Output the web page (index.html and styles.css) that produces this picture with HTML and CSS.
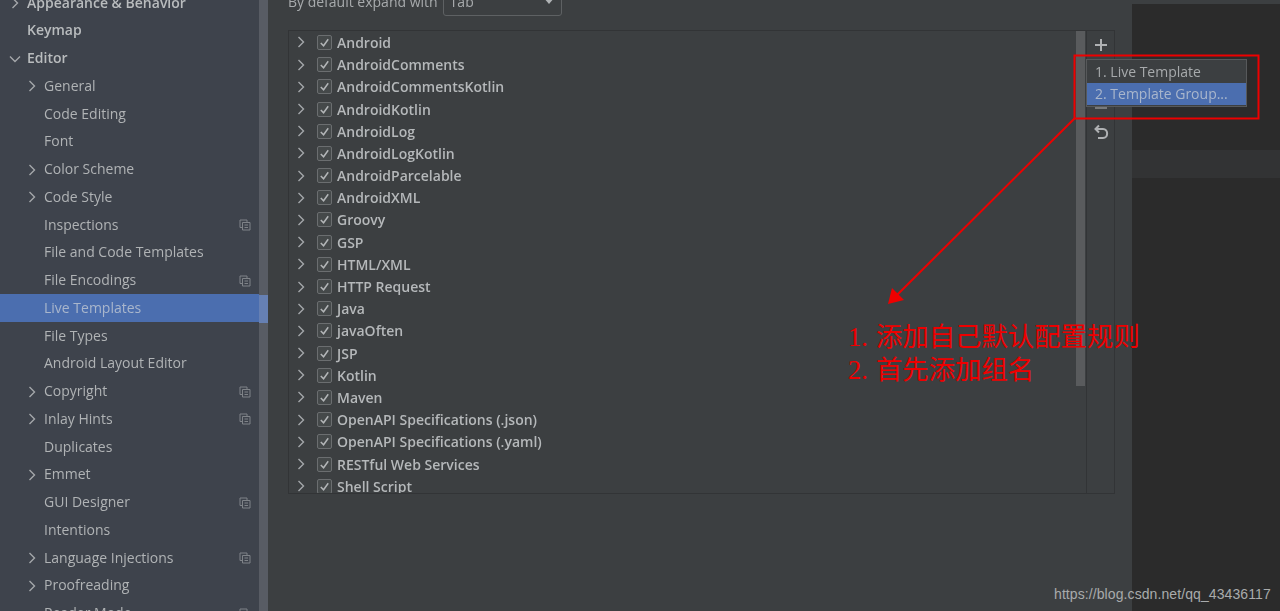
FILE: index.html
```html
<!DOCTYPE html>
<html lang="en">
<head>
<meta charset="utf-8">
<title>Live Templates</title>
<link rel="stylesheet" href="styles.css">
</head>
<body>
<svg class="defs" width="0" height="0" aria-hidden="true">
  <symbol id="right" viewBox="0 0 10 14"><path d="M2.5 2 L7.5 7 L2.5 12" fill="none" stroke="currentColor" stroke-width="1.4"/></symbol>
  <symbol id="down" viewBox="0 0 14 10"><path d="M2 2.5 L7 7.5 L12 2.5" fill="none" stroke="currentColor" stroke-width="1.4"/></symbol>
  <symbol id="proj" viewBox="0 0 12 12"><path d="M3.5 8.5H1V1h7v2.5" fill="none" stroke="currentColor"/><path d="M3.5 3.5h7.5v7.5H3.5z M5.5 6h3.5 M5.5 8.5h3.5" fill="none" stroke="currentColor"/></symbol>
</svg>
<div class="window">
  <nav class="sidebar">
    <ul class="tree">
      <li class="node top"><svg class="chev"><use href="#right"/></svg><span>Appearance &amp; Behavior</span></li>
      <li class="node top"><span class="chev"></span><span>Keymap</span></li>
      <li class="node top"><svg class="chev down"><use href="#down"/></svg><span>Editor</span></li>
      <li class="node sub"><svg class="chev"><use href="#right"/></svg><span>General</span></li>
      <li class="node sub"><span class="chev"></span><span>Code Editing</span></li>
      <li class="node sub"><span class="chev"></span><span>Font</span></li>
      <li class="node sub"><svg class="chev"><use href="#right"/></svg><span>Color Scheme</span></li>
      <li class="node sub"><svg class="chev"><use href="#right"/></svg><span>Code Style</span></li>
      <li class="node sub"><span class="chev"></span><span>Inspections</span><svg class="proj"><use href="#proj"/></svg></li>
      <li class="node sub"><span class="chev"></span><span>File and Code Templates</span></li>
      <li class="node sub"><span class="chev"></span><span>File Encodings</span><svg class="proj"><use href="#proj"/></svg></li>
      <li class="node sub selected"><span class="chev"></span><span>Live Templates</span></li>
      <li class="node sub"><span class="chev"></span><span>File Types</span></li>
      <li class="node sub"><span class="chev"></span><span>Android Layout Editor</span></li>
      <li class="node sub"><svg class="chev"><use href="#right"/></svg><span>Copyright</span><svg class="proj"><use href="#proj"/></svg></li>
      <li class="node sub"><svg class="chev"><use href="#right"/></svg><span>Inlay Hints</span><svg class="proj"><use href="#proj"/></svg></li>
      <li class="node sub"><span class="chev"></span><span>Duplicates</span></li>
      <li class="node sub"><svg class="chev"><use href="#right"/></svg><span>Emmet</span></li>
      <li class="node sub"><span class="chev"></span><span>GUI Designer</span><svg class="proj"><use href="#proj"/></svg></li>
      <li class="node sub"><span class="chev"></span><span>Intentions</span></li>
      <li class="node sub"><svg class="chev"><use href="#right"/></svg><span>Language Injections</span><svg class="proj"><use href="#proj"/></svg></li>
      <li class="node sub"><svg class="chev"><use href="#right"/></svg><span>Proofreading</span></li>
      <li class="node sub"><span class="chev"></span><span>Reader Mode</span><svg class="proj"><use href="#proj"/></svg></li>
    </ul>
  </nav>
  <div class="sidebar-scroll"><div class="sidebar-scroll-sel"></div></div>
  <main class="main">
    <div class="expand-row">
      <span class="expand-label">By default expand with</span>
      <div class="combo"><span class="expand-label">Tab</span><svg class="combo-arrow" viewBox="0 0 12 7"><path d="M0 0h12L6 7z" fill="currentColor"/></svg></div>
    </div>
    <section class="panel">
      <ul class="groups">
        <li class="group"><svg class="gchev"><use href="#right"/></svg><span class="check"><svg viewBox="0 0 14 14"><path d="M3 7.5 L6 10.5 L11 3.5" fill="none" stroke="currentColor" stroke-width="1.6"/></svg></span><span>Android</span></li>
        <li class="group"><svg class="gchev"><use href="#right"/></svg><span class="check"><svg viewBox="0 0 14 14"><path d="M3 7.5 L6 10.5 L11 3.5" fill="none" stroke="currentColor" stroke-width="1.6"/></svg></span><span>AndroidComments</span></li>
        <li class="group"><svg class="gchev"><use href="#right"/></svg><span class="check"><svg viewBox="0 0 14 14"><path d="M3 7.5 L6 10.5 L11 3.5" fill="none" stroke="currentColor" stroke-width="1.6"/></svg></span><span>AndroidCommentsKotlin</span></li>
        <li class="group"><svg class="gchev"><use href="#right"/></svg><span class="check"><svg viewBox="0 0 14 14"><path d="M3 7.5 L6 10.5 L11 3.5" fill="none" stroke="currentColor" stroke-width="1.6"/></svg></span><span>AndroidKotlin</span></li>
        <li class="group"><svg class="gchev"><use href="#right"/></svg><span class="check"><svg viewBox="0 0 14 14"><path d="M3 7.5 L6 10.5 L11 3.5" fill="none" stroke="currentColor" stroke-width="1.6"/></svg></span><span>AndroidLog</span></li>
        <li class="group"><svg class="gchev"><use href="#right"/></svg><span class="check"><svg viewBox="0 0 14 14"><path d="M3 7.5 L6 10.5 L11 3.5" fill="none" stroke="currentColor" stroke-width="1.6"/></svg></span><span>AndroidLogKotlin</span></li>
        <li class="group"><svg class="gchev"><use href="#right"/></svg><span class="check"><svg viewBox="0 0 14 14"><path d="M3 7.5 L6 10.5 L11 3.5" fill="none" stroke="currentColor" stroke-width="1.6"/></svg></span><span>AndroidParcelable</span></li>
        <li class="group"><svg class="gchev"><use href="#right"/></svg><span class="check"><svg viewBox="0 0 14 14"><path d="M3 7.5 L6 10.5 L11 3.5" fill="none" stroke="currentColor" stroke-width="1.6"/></svg></span><span>AndroidXML</span></li>
        <li class="group"><svg class="gchev"><use href="#right"/></svg><span class="check"><svg viewBox="0 0 14 14"><path d="M3 7.5 L6 10.5 L11 3.5" fill="none" stroke="currentColor" stroke-width="1.6"/></svg></span><span>Groovy</span></li>
        <li class="group"><svg class="gchev"><use href="#right"/></svg><span class="check"><svg viewBox="0 0 14 14"><path d="M3 7.5 L6 10.5 L11 3.5" fill="none" stroke="currentColor" stroke-width="1.6"/></svg></span><span>GSP</span></li>
        <li class="group"><svg class="gchev"><use href="#right"/></svg><span class="check"><svg viewBox="0 0 14 14"><path d="M3 7.5 L6 10.5 L11 3.5" fill="none" stroke="currentColor" stroke-width="1.6"/></svg></span><span>HTML/XML</span></li>
        <li class="group"><svg class="gchev"><use href="#right"/></svg><span class="check"><svg viewBox="0 0 14 14"><path d="M3 7.5 L6 10.5 L11 3.5" fill="none" stroke="currentColor" stroke-width="1.6"/></svg></span><span>HTTP Request</span></li>
        <li class="group"><svg class="gchev"><use href="#right"/></svg><span class="check"><svg viewBox="0 0 14 14"><path d="M3 7.5 L6 10.5 L11 3.5" fill="none" stroke="currentColor" stroke-width="1.6"/></svg></span><span>Java</span></li>
        <li class="group"><svg class="gchev"><use href="#right"/></svg><span class="check"><svg viewBox="0 0 14 14"><path d="M3 7.5 L6 10.5 L11 3.5" fill="none" stroke="currentColor" stroke-width="1.6"/></svg></span><span>javaOften</span></li>
        <li class="group"><svg class="gchev"><use href="#right"/></svg><span class="check"><svg viewBox="0 0 14 14"><path d="M3 7.5 L6 10.5 L11 3.5" fill="none" stroke="currentColor" stroke-width="1.6"/></svg></span><span>JSP</span></li>
        <li class="group"><svg class="gchev"><use href="#right"/></svg><span class="check"><svg viewBox="0 0 14 14"><path d="M3 7.5 L6 10.5 L11 3.5" fill="none" stroke="currentColor" stroke-width="1.6"/></svg></span><span>Kotlin</span></li>
        <li class="group"><svg class="gchev"><use href="#right"/></svg><span class="check"><svg viewBox="0 0 14 14"><path d="M3 7.5 L6 10.5 L11 3.5" fill="none" stroke="currentColor" stroke-width="1.6"/></svg></span><span>Maven</span></li>
        <li class="group"><svg class="gchev"><use href="#right"/></svg><span class="check"><svg viewBox="0 0 14 14"><path d="M3 7.5 L6 10.5 L11 3.5" fill="none" stroke="currentColor" stroke-width="1.6"/></svg></span><span>OpenAPI Specifications (.json)</span></li>
        <li class="group"><svg class="gchev"><use href="#right"/></svg><span class="check"><svg viewBox="0 0 14 14"><path d="M3 7.5 L6 10.5 L11 3.5" fill="none" stroke="currentColor" stroke-width="1.6"/></svg></span><span>OpenAPI Specifications (.yaml)</span></li>
        <li class="group"><svg class="gchev"><use href="#right"/></svg><span class="check"><svg viewBox="0 0 14 14"><path d="M3 7.5 L6 10.5 L11 3.5" fill="none" stroke="currentColor" stroke-width="1.6"/></svg></span><span>RESTful Web Services</span></li>
        <li class="group"><svg class="gchev"><use href="#right"/></svg><span class="check"><svg viewBox="0 0 14 14"><path d="M3 7.5 L6 10.5 L11 3.5" fill="none" stroke="currentColor" stroke-width="1.6"/></svg></span><span>Shell Script</span></li>
      </ul>
      <div class="list-scroll"></div>
      <div class="toolbar">
        <svg class="tool tool-plus" viewBox="0 0 12 12"><path d="M6 0v12M0 6h12" stroke="currentColor" stroke-width="2"/></svg>
        <svg class="tool tool-minus" viewBox="0 0 12 12"><path d="M0 6h12" stroke="currentColor" stroke-width="2"/></svg>
        <svg class="tool tool-undo" viewBox="0 0 16 16"><path d="M6 1.5 L2.5 5 L6 8.5 M2.5 5 H10 C15.5 5 15.5 14 10 14 H5" fill="none" stroke="currentColor" stroke-width="2"/></svg>
      </div>
    </section>
  </main>
  <aside class="editor">
    <div class="editor-top"></div>
    <div class="editor-band"></div>
  </aside>
  <div class="popup">
    <div class="popup-item">1. Live Template</div>
    <div class="popup-item active">2. Template Group...</div>
  </div>
</div>
<svg class="annot" viewBox="0 0 1280 611" aria-hidden="true">
  <rect x="1074.5" y="55.5" width="184" height="63" fill="none" stroke="#ee0000" stroke-width="2"/>
  <path d="M1075 118 L895 297" fill="none" stroke="#ee0000" stroke-width="2"/>
  <path d="M888 304 L892 288 L904 300 Z" fill="#ee0000"/>
</svg>
<div class="note">
  <div>1. 添加自己默认配置规则</div>
  <div>2. 首先添加组名</div>
</div>
<div class="watermark">https://blog.csdn.net/qq_43436117</div>
</body>
</html>
```
FILE: styles.css
```css
* { box-sizing: border-box; }
html, body { margin: 0; height: 611px; overflow: hidden; background: #3c3f41; }
ul { list-style: none; margin: 0; padding: 0; }
.defs { position: absolute; }

.window {
  display: flex;
  height: 611px;
  overflow: hidden;
  font-family: "Open Sans", "Noto Sans", sans-serif;
  color: #b0b3b5;
  filter: blur(0.35px);
}

.sidebar { width: 259px; flex: none; background: #3e434c; overflow: hidden; }
.tree { margin-top: -10.8px; }
.node {
  display: flex;
  align-items: center;
  height: 27.76px;
  font-size: 14px;
  white-space: nowrap;
}
.node > span { margin-bottom: 2px; }
.node.top { padding-left: 10px; font-weight: 600; color: #b9bcbe; }
.node.sub { padding-left: 27px; }
.node .chev { width: 10px; height: 14px; flex: none; margin-right: 7px; color: #a4a7aa; }
.node .chev.down { width: 14px; height: 10px; margin-left: -2px; margin-right: 5px; }
.node.selected { background: #4b6eaf; color: #a9b6cc; }
.proj { width: 12px; height: 12px; margin-left: auto; margin-right: 8px; color: #7f8388; }

.sidebar-scroll { width: 9px; flex: none; background: #585c64; position: relative; }
.sidebar-scroll-sel { position: absolute; left: 0; top: 295px; width: 9px; height: 28px; background: #6680b3; }

.main {
  width: 864px;
  flex: none;
  background: #3c3f41;
  padding-left: 20px;
  padding-right: 17px;
  font-size: 14px;
}
.expand-row {
  display: flex;
  align-items: center;
  gap: 5px;
  height: 24px;
  margin-top: -8px;
  color: #a8abad;
}
.expand-label { margin-top: -5px; }
.combo {
  width: 119px;
  height: 24px;
  border: 1px solid #5e6163;
  border-radius: 3px;
  display: flex;
  align-items: center;
  justify-content: space-between;
  padding: 0 6px;
}
.combo-arrow { width: 12px; height: 7px; color: #b0b3b5; margin-top: -8px; }

.panel {
  position: relative;
  display: flex;
  height: 464px;
  margin-top: 14px;
  border: 1px solid #323436;
  overflow: hidden;
}
.groups { flex: 1; padding-top: 0.4px; overflow: hidden; }
.group {
  display: flex;
  align-items: center;
  height: 22.2px;
  padding-left: 7px;
  font-weight: 600;
  font-size: 14px;
  color: #b5b8ba;
  white-space: nowrap;
}
.gchev { width: 10px; height: 14px; flex: none; color: #a4a7aa; margin-right: 11px; }
.check {
  width: 15px;
  height: 15px;
  flex: none;
  border: 1px solid #6b6e70;
  border-radius: 2px;
  background: #45494a;
  margin-right: 5px;
  color: #b3b6b8;
  display: flex;
}
.check svg { width: 13px; height: 13px; }
.list-scroll {
  position: absolute;
  top: 0;
  left: 787px;
  width: 9px;
  height: 355px;
  background: #595b5d;
}
.toolbar {
  width: 28px;
  flex: none;
  border-left: 1px solid #323436;
  display: flex;
  flex-direction: column;
  align-items: center;
  color: #afb1b3;
}
.tool { display: block; flex: none; }
.tool-plus { width: 12px; height: 12px; margin-top: 8px; }
.tool-minus { width: 12px; height: 12px; margin-top: 51px; color: #77797b; }
.tool-undo { width: 16px; height: 16px; margin-top: 10px; margin-left: 1px; }

.editor { flex: 1; background: #2b2b2b; position: relative; }
.editor-top { height: 4px; background: #3c3f41; }
.editor-band { height: 28px; margin-top: 146px; background: #323334; }

.popup {
  position: absolute;
  left: 1086px;
  top: 59px;
  width: 161px;
  height: 48px;
  background: #3c3f41;
  border: 1px solid #57595b;
  padding-top: 1px;
  font-size: 14px;
  color: #a7aaac;
}
.popup-item { height: 22px; line-height: 22px; padding-left: 8px; white-space: nowrap; }
.popup-item.active { background: #4b6eaf; color: #a9b6cc; }

.annot { position: absolute; left: 0; top: 0; width: 1280px; height: 611px; pointer-events: none; }
.note {
  position: absolute;
  left: 848px;
  top: 321px;
  font-family: "Liberation Serif", "Noto Sans CJK SC", serif;
  font-size: 26.4px;
  line-height: 33px;
  word-spacing: 1.5px;
  color: #ee0000;
  white-space: nowrap;
}
.watermark {
  position: absolute;
  left: 1054px;
  top: 586px;
  font-family: "Liberation Sans", sans-serif;
  font-size: 14px;
  line-height: 16px;
  letter-spacing: 0.09px;
  color: #a9abac;
  white-space: nowrap;
}
```
